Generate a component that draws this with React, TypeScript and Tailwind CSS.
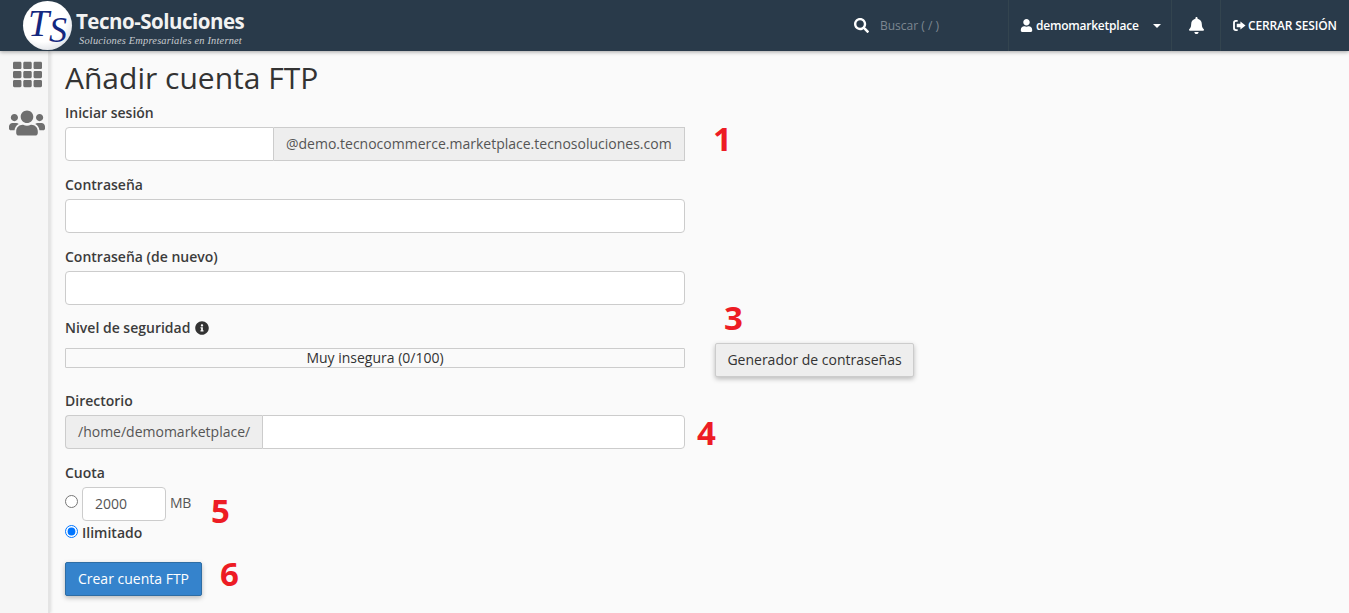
import { FaBell, FaInfoCircle, FaSearch, FaTh, FaUser, FaUsers } from 'react-icons/fa'

const inputClass = 'block h-[34px] min-w-0 border border-[#ccc] bg-white px-3 text-sm text-[#555]'

function Field({ label, children, mark }: { label: React.ReactNode; children: React.ReactNode; mark?: React.ReactNode }) {
  return (
    <div className="relative w-[620px]">
      <div className="mb-[4px] h-5 text-sm leading-5 font-semibold text-[#3c3c3c]">{label}</div>
      {children}
      {mark}
    </div>
  )
}

function Mark({ n, className }: { n: string; className: string }) {
  return <span className={`absolute text-[33px] leading-[44px] font-bold text-[#ed1c24] ${className}`}>{n}</span>
}

function Logo() {
  return (
    <div className="flex items-center pl-[23px]">
      <div className="flex h-[49px] w-[49px] items-center justify-center rounded-full bg-[radial-gradient(circle_at_40%_35%,#ffffff_55%,#c2c7d0_100%)] font-['Liberation_Serif',serif] text-[38px] leading-none text-[#14287f] italic">
        <span className="-mt-[6px]">T</span>
        <span className="mt-[8px] text-[36px]">S</span>
      </div>
      <div className="mt-[3px] ml-1 flex flex-col">
        <span className="text-[20.5px] leading-[26px] font-bold tracking-[-0.5px] text-[#f2f2f2]">Tecno-Soluciones</span>
        <span className="mt-[1px] ml-[3px] font-['Liberation_Serif',serif] text-[10.4px] leading-[12px] tracking-[0.2px] text-[#c8ccd0] italic">
          Soluciones Empresariales en Internet
        </span>
      </div>
    </div>
  )
}

function Header() {
  return (
    <header className="relative z-10 flex h-[51px] items-center justify-between bg-[#293a4a] shadow-[0_1px_4px_rgba(0,0,0,0.35)]">
      <Logo />
      <div className="flex h-full items-center text-white">
        <div className="flex h-full w-[168px] items-center">
          <FaSearch className="ml-[14px] h-[15px] w-[15px]" />
          <span className="ml-[11px] text-xs text-[#7d8791]">Buscar ( / )</span>
        </div>
        <div className="flex h-full w-[163px] items-center border-l border-[#33444f] pl-[11px]">
          <FaUser className="h-[13px] w-[13px]" />
          <span className="ml-[3px] text-xs font-semibold tracking-[-0.22px]">demomarketplace</span>
          <span className="ml-[14px] h-0 w-0 border-x-[4px] border-t-[4px] border-x-transparent border-t-white" />
        </div>
        <div className="flex h-full w-[49px] items-center justify-center border-l border-[#33444f]">
          <FaBell className="h-[17px] w-[17px]" />
        </div>
        <div className="flex h-full w-[129px] items-center border-l border-[#33444f] pl-[12px]">
          <svg viewBox="0 0 14 12" className="h-[11px] w-[13px]" fill="currentColor">
            <path d="M5 0H3a3 3 0 0 0-3 3v6a3 3 0 0 0 3 3h2v-2H3.2A1.2 1.2 0 0 1 2 8.8V3.2A1.2 1.2 0 0 1 3.2 2H5z" />
            <path d="M8 1.6 13.6 6 8 10.4V8H4V4h4z" />
          </svg>
          <span className="ml-[2px] text-xs font-semibold tracking-[-0.15px]">CERRAR SESIÓN</span>
        </div>
      </div>
    </header>
  )
}

function Sidebar() {
  return (
    <aside className="flex w-[50px] shrink-0 flex-col items-center border-r-2 border-[#e4e4e4] bg-[#f6f6f6] text-[#6f6f6f] shadow-[1px_0_3px_rgba(0,0,0,0.12)]">
      <FaTh className="mt-[9px] ml-[7px] h-[29px] w-[29px]" />
      <FaUsers className="mt-[17px] ml-[6px] h-[34px] w-[36px]" />
    </aside>
  )
}

export default function App() {
  return (
    <div className="flex h-[613px] flex-col overflow-hidden bg-[#fafafa] font-['Open_Sans',sans-serif]">
      <Header />
      <div className="flex min-h-0 flex-1">
        <Sidebar />
        <main className="flex-1 pl-[15px]">
          <h1 className="mt-[7px] mb-[5px] h-10 text-[30px] leading-10 font-normal text-[#333]">Añadir cuenta FTP</h1>

          <div className="flex flex-col">
            <Field label="Iniciar sesión" mark={<Mark n="1" className="top-[14px] left-[648px]" />}>
              <div className="flex">
                <input className={`${inputClass} w-[209px] rounded-l`} />
                <div className="flex h-[34px] flex-1 items-center border border-l-0 border-[#ccc] bg-[#eee] px-3 text-sm text-[#555]">
                  @demo.tecnocommerce.marketplace.tecnosoluciones.com
                </div>
              </div>
            </Field>

            <div className="mt-[14px]">
              <Field label="Contraseña">
                <input className={`${inputClass} w-full rounded`} />
              </Field>
            </div>

            <div className="mt-[14px]">
              <Field label="Contraseña (de nuevo)">
                <input className={`${inputClass} w-full rounded`} />
              </Field>
            </div>

            <div className="relative mt-[13px] flex items-start">
              <div className="w-[620px]">
                <div className="mb-[10px] flex h-5 items-center gap-[5px] text-sm font-semibold text-[#3c3c3c]">
                  Nivel de seguridad
                  <FaInfoCircle className="h-[14px] w-[14px] text-[#333]" />
                </div>
                <div className="flex h-5 items-center justify-center rounded-[1px] border border-[#ccc] bg-[#fafafa] text-sm text-[#333]">
                  Muy insegura (0/100)
                </div>
              </div>
              <Mark n="3" className="top-[-22px] left-[659px]" />
              <button className="mt-[25px] ml-[30px] h-[34px] w-[199px] rounded-[2px] border border-[#ccc] bg-[#eee] text-sm text-[#333] shadow-[0_2px_5px_rgba(0,0,0,0.26)]">
                Generador de contraseñas
              </button>
            </div>

            <div className="mt-[14px]">
              <Field label="Directorio" mark={<Mark n="4" className="top-[20px] left-[632px]" />}>
                <div className="flex">
                  <div className="flex h-[34px] w-[197px] items-center rounded-l border border-r-0 border-[#ccc] bg-[#eee] px-3 text-sm text-[#555]">
                    /home/demomarketplace/
                  </div>
                  <input className={`${inputClass} flex-1 rounded-r`} />
                </div>
              </Field>
            </div>

            <div className="mt-[14px]">
              <Field label="Cuota" mark={<Mark n="5" className="top-[26px] left-[146px]" />}>
                <div className="flex items-start">
                  <input type="radio" name="quota" className="mt-[8px] h-[13px] w-[13px]" />
                  <div className="ml-[4px] flex h-[34px] w-[84px] items-center rounded border border-[#ccc] bg-white px-3 text-sm text-[#555]">
                    2000
                  </div>
                  <span className="mt-[6px] ml-[4px] text-sm tracking-[-0.3px] text-[#555]">MB</span>
                </div>
                <label className="mt-[2px] flex h-5 items-center text-sm font-semibold text-[#3c3c3c]">
                  <input type="radio" name="quota" defaultChecked className="mb-[4px] h-[13px] w-[13px]" />
                  <span className="ml-[4px]">Ilimitado</span>
                </label>
              </Field>
            </div>

            <div className="relative mt-[19px] flex">
              <button className="h-[34px] w-[137px] rounded-[2px] border border-[#2e6da4] bg-[#3583cc] text-sm text-white shadow-[0_2px_5px_rgba(0,0,0,0.26)]">
                Crear cuenta FTP
              </button>
              <Mark n="6" className="top-[-10px] left-[155px]" />
            </div>
          </div>
        </main>
      </div>
    </div>
  )
}
